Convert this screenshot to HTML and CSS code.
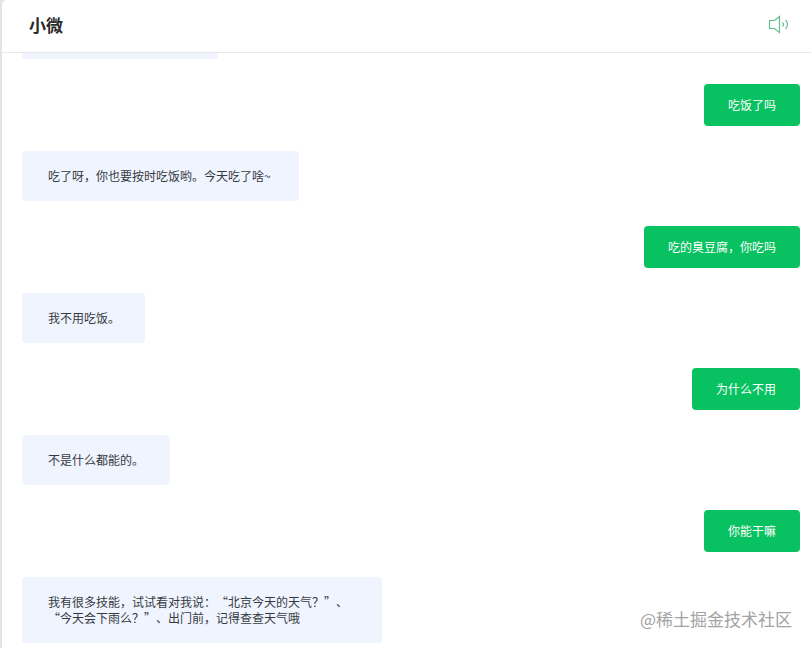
FILE: index.html
```html
<!DOCTYPE html>
<html lang="zh-CN">
<head>
<meta charset="utf-8">
<title>小微</title>
<link rel="stylesheet" href="styles.css">
</head>
<body>
<main class="chat">
  <header class="header">
    <h1 class="title">小微</h1>
    <svg class="sound" width="22" height="20" viewBox="0 0 22 20" fill="none">
      <path d="M1.5 5.5H6.5L11.5 1.5V17.5L6.5 13.5H1.5Z"/>
      <path d="M14.5 7.5Q16.5 9.5 14.5 11.5M17.5 5Q21.5 9.5 17.5 14"/>
    </svg>
  </header>
  <section class="messages">
    <div class="bubble bot previous"></div>
    <div class="bubble user">吃饭了吗</div>
    <div class="bubble bot medium">吃了呀，你也要按时吃饭哟。今天吃了啥~</div>
    <div class="bubble user">吃的臭豆腐，你吃吗</div>
    <div class="bubble bot short">我不用吃饭。</div>
    <div class="bubble user">为什么不用</div>
    <div class="bubble bot">不是什么都能的。</div>
    <div class="bubble user">你能干嘛</div>
    <div class="bubble bot long">我有很多技能，试试看对我说：“北京今天的天气？”、<br>“今天会下雨么？”、出门前，记得查查天气哦</div>
  </section>
</main>
<div class="watermark">@稀土掘金技术社区</div>
</body>
</html>
```
FILE: styles.css
```css
* { box-sizing: border-box; }
body {
  margin: 0;
  height: 648px;
  overflow: hidden;
  background: #e4e4e4;
  font-family: "Noto Sans CJK SC", sans-serif;
  text-spacing-trim: space-all;
}
.chat {
  display: flex;
  flex-direction: column;
  height: 648px;
  margin-left: 2px;
  background: #fff;
  border-top-left-radius: 5px;
}
.header {
  display: flex;
  flex: none;
  align-items: center;
  justify-content: space-between;
  height: 53px;
  padding: 0 21px 2px 27px;
  border-bottom: 1px solid #e7e7e7;
}
.title {
  margin: 0;
  font-size: 17px;
  line-height: 24px;
  font-weight: 700;
  color: #2b2b2b;
}
.sound { margin-bottom: 1px; stroke: #62bd8b; stroke-width: 1.15; }
.messages {
  display: flex;
  flex: 1;
  flex-direction: column;
  align-items: flex-start;
  gap: 25px;
  padding: 0 11px 0 20px;
  overflow: hidden;
}
.bubble {
  flex: none;
  border-radius: 4px;
  font-size: 12px;
  line-height: 16px;
  white-space: nowrap;
}
.bot {
  padding: 17px 26px;
  background: #eff4ff;
  color: #363a40;
}
.user {
  align-self: flex-end;
  padding: 13px 24px;
  background: #08c160;
  color: #fff;
}
.previous {
  width: 196px;
  height: 6px;
  padding: 0;
  border-radius: 0 0 4px 4px;
}
.short { width: 123px; }
.medium { width: 277px; }
.long { width: 360px; }
.watermark {
  position: absolute;
  right: 19px;
  bottom: 17px;
  font-size: 17px;
  line-height: 24px;
  color: #a3a3a3;
}
```
